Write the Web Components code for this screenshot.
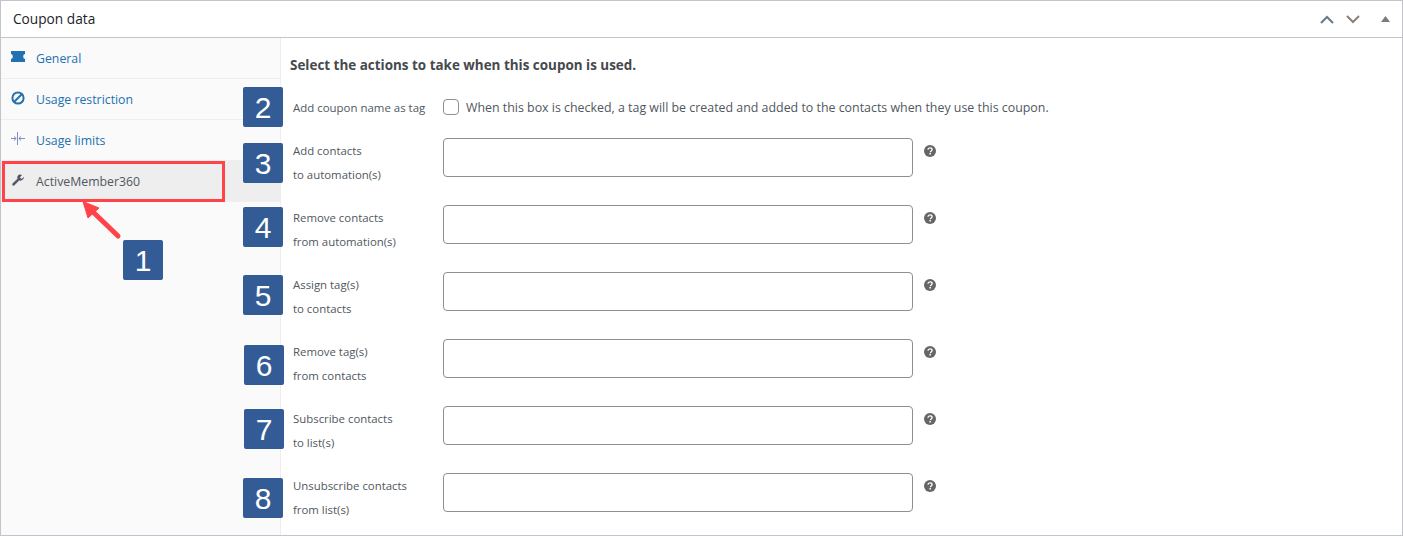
<!DOCTYPE html>
<html>
<head>
<meta charset="utf-8">
<style>
  html, body { margin: 0; padding: 0; background: #fff; }
  body { font-family: "Open Sans", sans-serif; color: #50575e; }
</style>
</head>
<body>
<coupon-panel title-text="Coupon data">
  <tab-item slot="tabs" label="General" icon="ticket"></tab-item>
  <tab-item slot="tabs" label="Usage restriction" icon="ban"></tab-item>
  <tab-item slot="tabs" label="Usage limits" icon="limits"></tab-item>
  <tab-item slot="tabs" label="ActiveMember360" icon="wrench" active></tab-item>

  <check-row label="Add coupon name as tag">When this box is checked, a tag will be created and added to the contacts when they use this coupon.</check-row>
  <field-row first="Add contacts" second="to automation(s)"></field-row>
  <field-row first="Remove contacts" second="from automation(s)"></field-row>
  <field-row first="Assign tag(s)" second="to contacts"></field-row>
  <field-row first="Remove tag(s)" second="from contacts"></field-row>
  <field-row first="Subscribe contacts" second="to list(s)"></field-row>
  <field-row first="Unsubscribe contacts" second="from list(s)"></field-row>

  <step-badge slot="notes" style="left:123px;top:240px">1</step-badge>
  <step-badge slot="notes" style="left:243px;top:87px">2</step-badge>
  <step-badge slot="notes" style="left:243px;top:143px">3</step-badge>
  <step-badge slot="notes" style="left:243px;top:207px">4</step-badge>
  <step-badge slot="notes" style="left:243px;top:275px">5</step-badge>
  <step-badge slot="notes" style="left:244px;top:345px">6</step-badge>
  <step-badge slot="notes" style="left:244px;top:409px">7</step-badge>
  <step-badge slot="notes" style="left:243px;top:478px">8</step-badge>
</coupon-panel>

<script>
// Tab icons, drawn on a 14x14 box
const ICONS = {
  ticket: `<path fill="#2271b1" d="M0 1h14v3a2.400 2.400 0 0 0-1.800 2.500A2.400 2.400 0 0 0 14 9v3H0V9a2.400 2.400 0 0 0 1.800-2.500A2.400 2.400 0 0 0 0 4z"/>`,
  ban: `<circle cx="7" cy="7" r="5.600" fill="none" stroke="#2271b1" stroke-width="2"/><path d="M3 11 11 3" stroke="#2271b1" stroke-width="2"/>`,
  limits: `<g fill="none" stroke="#7d8fc4" stroke-width="1"><path d="M6.500 0v13M0 6.500h5M8 6.500h6"/><path d="M3 4.500 5.200 6.500 3 8.500M10 4.500 7.800 6.500 10 8.500"/></g>`,
  wrench: `<path transform="translate(1 .2) scale(.88)" fill="#50575e" stroke="#50575e" stroke-width=".4" d="M13.400 3.400 11 5.700 8.800 3.500 11 1.100C9.300.2 7.300.7 6.500 2.300c-.5 1-.5 2 0 2.800L.8 10.700c-.5.500-.5 1.300 0 1.800s1.300.5 1.800 0l5.600-5.600c1 .5 2.100.4 3.100-.2 1.500-.9 2.100-2.600 2.100-3.300z"/>`
};

class CouponPanel extends HTMLElement {
  constructor() {
    super();
    this.attachShadow({ mode: "open" });
    this.shadowRoot.innerHTML = `
    <style>
      :host {
        display: block;
        position: relative;
        box-sizing: border-box;
        width: 1403px;
        height: 536px;
        overflow: hidden;
        background: #fff;
        border: 1px solid #c3c4c7;
      }
      header {
        display: flex;
        align-items: center;
        box-sizing: border-box;
        height: 37px;
        padding: 0 12px 0 12px;
        border-bottom: 1px solid #c3c4c7;
      }
      h2 {
        flex: 1;
        margin: 0 0 1px;
        font-size: 13.7px;
        font-weight: 400;
        color: #1d2327;
      }
      .ctl { display: flex; align-items: center; gap: 12px; }
      .ctl svg { display: block; }
      .ctl .tri { margin-left: 9px; }
      .body { display: flex; height: 497px; }
      nav {
        box-sizing: border-box;
        width: 280px;
        background: #fafafa;
        border-right: 1px solid #eee;
      }
      main { flex: 1; padding: 16px 0 0 9px; }
      h3 {
        margin: 0 0 19px;
        font-size: 13.45px;
        font-weight: 700;
        line-height: 22px;
        color: #46494d;
      }
      .mark {
        position: absolute;
        left: 1px;
        top: 160px;
        width: 223px;
        height: 41px;
        box-sizing: border-box;
        border: 3px solid #ff4348;
      }
      .arrow { position: absolute; left: 75px; top: 195px; }
    </style>
    <header>
      <h2>${this.getAttribute("title-text")}</h2>
      <div class="ctl">
        <svg width="14" height="9" viewBox="0 0 14 9"><path d="M1 8 7 2l6 6" fill="none" stroke="#6b7a85" stroke-width="2"/></svg>
        <svg width="14" height="9" viewBox="0 0 14 9"><path d="M1 1l6 6 6-6" fill="none" stroke="#8a8272" stroke-width="2"/></svg>
        <svg class="tri" width="9" height="6" viewBox="0 0 9 6"><path d="M4.500 0 9 6H0z" fill="#787c82"/></svg>
      </div>
    </header>
    <div class="body">
      <nav><slot name="tabs"></slot></nav>
      <main>
        <h3>Select the actions to take when this coupon is used.</h3>
        <slot></slot>
      </main>
    </div>
    <div class="mark"></div>
    <svg class="arrow" width="50" height="46" viewBox="0 0 50 46">
      <path d="M42 40 15 14" stroke="#ff4348" stroke-width="5" stroke-linecap="round"/>
      <path d="M7 5.500 23 12 12 22z" fill="#ff4348" stroke="#ff4348" stroke-width="1"/>
    </svg>
    <slot name="notes"></slot>
    `;
  }
}

class TabItem extends HTMLElement {
  constructor() {
    super();
    this.attachShadow({ mode: "open" });
    this.shadowRoot.innerHTML = `
    <style>
      :host {
        display: flex;
        align-items: center;
        gap: 11px;
        box-sizing: border-box;
        height: 41px;
        padding: 0 0 0 10px;
        font-size: 12.3px;
        color: #2271b1;
        border-bottom: 1px solid #eee;
      }
      :host([active]) {
        background: #eee;
        color: #50575e;
        border-bottom: 0;
      }
      svg { display: block; flex: none; margin-top: -2px; }
    </style>
    <svg width="14" height="14" viewBox="0 0 14 14">${ICONS[this.getAttribute("icon")]}</svg>
    <span>${this.getAttribute("label")}</span>
    `;
  }
}

class CheckRow extends HTMLElement {
  constructor() {
    super();
    this.attachShadow({ mode: "open" });
    this.shadowRoot.innerHTML = `
    <style>
      :host {
        display: flex;
        align-items: center;
        height: 24px;
        margin-bottom: 19px;
        font-size: 11.45px;
        color: #50575e;
      }
      .label { width: 153px; padding-left: 3px; box-sizing: border-box; white-space: nowrap; }
      .box {
        width: 16px;
        height: 16px;
        box-sizing: border-box;
        border: 1px solid #8c8f94;
        border-radius: 4px;
        background: #fff;
        margin-right: 7px;
      }
      .text { font-size: 12.4px; white-space: nowrap; }
    </style>
    <span class="label">${this.getAttribute("label")}</span>
    <span class="box"></span>
    <span class="text"><slot></slot></span>
    `;
  }
}

class FieldRow extends HTMLElement {
  constructor() {
    super();
    this.attachShadow({ mode: "open" });
    this.shadowRoot.innerHTML = `
    <style>
      :host {
        display: flex;
        align-items: flex-start;
        height: 67px;
        font-size: 11.4px;
        color: #50575e;
      }
      .label {
        width: 153px;
        padding: 1px 0 0 3px;
        box-sizing: border-box;
        line-height: 24px;
      }
      .field {
        width: 470px;
        height: 39px;
        box-sizing: border-box;
        border: 1px solid #8c8f94;
        border-radius: 4px;
        background: #fff;
      }
      svg { display: block; margin: 7px 0 0 11px; }
    </style>
    <div class="label">${this.getAttribute("first")}<br>${this.getAttribute("second")}</div>
    <div class="field"></div>
    <svg width="12" height="12" viewBox="0 0 12 12">
      <circle cx="6" cy="6" r="6" fill="#666"/>
      <path d="M3.900 4.700C4 3.400 4.900 2.800 6 2.800c1.200 0 2.100.7 2.100 1.700 0 1.500-1.700 1.400-1.700 2.700" fill="none" stroke="#fff" stroke-width="1.300"/>
      <rect x="5.400" y="8" width="1.500" height="1.500" fill="#fff"/>
    </svg>
    `;
  }
}

class StepBadge extends HTMLElement {
  constructor() {
    super();
    this.attachShadow({ mode: "open" });
    this.shadowRoot.innerHTML = `
    <style>
      :host {
        position: absolute;
        display: flex;
        align-items: center;
        justify-content: center;
        box-sizing: border-box;
        width: 40px;
        height: 40px;
        padding-top: 2px;
        margin: -1px 0 0 -1px;
        border-radius: 2px;
        background: #335c96;
        color: #fff;
        font: 30px/1 "Liberation Sans", sans-serif;
      }
    </style>
    <slot></slot>
    `;
  }
}

customElements.define("coupon-panel", CouponPanel);
customElements.define("tab-item", TabItem);
customElements.define("check-row", CheckRow);
customElements.define("field-row", FieldRow);
customElements.define("step-badge", StepBadge);
</script>
</body>
</html>
